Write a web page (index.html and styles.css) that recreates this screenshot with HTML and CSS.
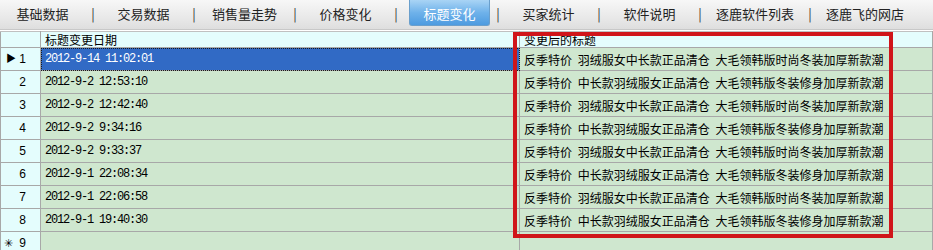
FILE: index.html
```html
<!DOCTYPE html>
<html lang="zh-CN">
<head>
  <meta charset="UTF-8" />
  <title>标题变化</title>
  <link rel="stylesheet" href="styles.css">
</head>
<body>

  <nav class="tabs">
    <span class="tab">基础数据</span><span class="sep">|</span>
    <span class="tab">交易数据</span><span class="sep">|</span>
    <span class="tab">销售量走势</span><span class="sep">|</span>
    <span class="tab">价格变化</span><span class="sep">|</span>
    <span class="tab active">标题变化</span><span class="sep">|</span>
    <span class="tab">买家统计</span><span class="sep">|</span>
    <span class="tab">软件说明</span><span class="sep">|</span>
    <span class="tab wide">逐鹿软件列表</span><span class="sep">|</span>
    <span class="tab wide">逐鹿飞的网店</span>
  </nav>

  <div class="grid-wrap">
    <table class="grid">
      <colgroup>
        <col class="c-head">
        <col class="c-date">
        <col class="c-title">
      </colgroup>
      <thead>
        <tr>
          <th class="rowhead"></th>
          <th>标题变更日期</th>
          <th>变更后的标题</th>
        </tr>
      </thead>
      <tbody>
        <tr>
          <td class="rowhead"><span class="mark">&#9654;</span>1</td>
          <td class="date selected">2012-9-14 11:02:01</td>
          <td class="title">反季特价 羽绒服女中长款正品清仓 大毛领韩版时尚冬装加厚新款潮</td>
        </tr>
        <tr>
          <td class="rowhead">2</td>
          <td class="date">2012-9-2 12:53:10</td>
          <td class="title">反季特价 中长款羽绒服女正品清仓 大毛领韩版冬装修身加厚新款潮</td>
        </tr>
        <tr>
          <td class="rowhead">3</td>
          <td class="date">2012-9-2 12:42:40</td>
          <td class="title">反季特价 羽绒服女中长款正品清仓 大毛领韩版时尚冬装加厚新款潮</td>
        </tr>
        <tr>
          <td class="rowhead">4</td>
          <td class="date">2012-9-2 9:34:16</td>
          <td class="title">反季特价 中长款羽绒服女正品清仓 大毛领韩版冬装修身加厚新款潮</td>
        </tr>
        <tr>
          <td class="rowhead">5</td>
          <td class="date">2012-9-2 9:33:37</td>
          <td class="title">反季特价 羽绒服女中长款正品清仓 大毛领韩版时尚冬装加厚新款潮</td>
        </tr>
        <tr>
          <td class="rowhead">6</td>
          <td class="date">2012-9-1 22:08:34</td>
          <td class="title">反季特价 中长款羽绒服女正品清仓 大毛领韩版冬装修身加厚新款潮</td>
        </tr>
        <tr>
          <td class="rowhead">7</td>
          <td class="date">2012-9-1 22:06:58</td>
          <td class="title">反季特价 羽绒服女中长款正品清仓 大毛领韩版时尚冬装加厚新款潮</td>
        </tr>
        <tr>
          <td class="rowhead">8</td>
          <td class="date">2012-9-1 19:40:30</td>
          <td class="title">反季特价 中长款羽绒服女正品清仓 大毛领韩版冬装修身加厚新款潮</td>
        </tr>
        <tr>
          <td class="rowhead"><span class="mark star">&#10035;</span>9</td>
          <td class="date"></td>
          <td></td>
        </tr>
      </tbody>
    </table>

    <div class="highlight"></div>
  </div>

</body>
</html>
```

FILE: styles.css
```css
body {
  margin: 0;
  font-family: "Noto Sans CJK SC", "Liberation Sans", sans-serif;
  background: #ffffff;
  color: #000;
  overflow: hidden;
}

.tabs {
  display: flex;
  align-items: flex-start;
  height: 29px;
  padding-left: 2px;
  background: linear-gradient(#f7f7f7, #e9e9e9 60%, #dedede);
  border-bottom: 1px solid #c8c8c8;
  font-size: 13px;
}

.tab {
  width: 81px;
  height: 26px;
  line-height: 28px;
  text-align: center;
  color: #222;
}

.tab.wide {
  width: 90px;
}

.tab.active {
  color: #ffffff;
  background: linear-gradient(#a9d4f5, #6fb2ea 50%, #4d9be0);
  border: 1px solid #6a9fcc;
  border-top: none;
  border-radius: 0 0 3px 3px;
  height: 25px;
  width: 79px;
  margin-left: 3px;
  margin-right: -2px;
}

.sep {
  width: 20px;
  line-height: 28px;
  text-align: center;
  color: #333;
}

.grid-wrap {
  position: relative;
  padding-top: 1px;
}

.grid {
  border-collapse: collapse;
  table-layout: fixed;
  width: 932px;
  font-size: 12px;
  border-left: 1px solid #a0a0a0;
}

.c-head { width: 40px; }
.c-date { width: 479px; }
.c-title { width: 413px; }

.grid th {
  height: 15px;
  padding: 0 0 0 4px;
  text-align: left;
  font-weight: normal;
  background: #e4fdfd;
  border: 1px solid #a8a8a8;
  border-top-color: #c0c0c0;
  line-height: 15px;
  white-space: nowrap;
}

.grid td {
  height: 22px;
  padding: 0 0 0 4px;
  background: #cfe7cf;
  border: 1px solid #a8a8a8;
  white-space: nowrap;
  overflow: hidden;
}

.grid td.rowhead {
  position: relative;
  background: #e4fdfd;
  text-align: right;
  padding: 0 14px 0 0;
  font-family: "Liberation Sans", sans-serif;
}

.mark {
  position: absolute;
  left: 5px;
  top: 5px;
  font-size: 10px;
  line-height: 12px;
}

.mark.star {
  left: 3px;
  font-size: 11px;
}

.date {
  font-family: "Liberation Mono", monospace;
  letter-spacing: -1.2px;
}

.title {
  word-spacing: 3px;
}

.grid td.selected {
  background: #316ac5;
  color: #ffffff;
  outline: 1px dotted #1a1a1a;
  outline-offset: -1px;
}

.highlight {
  position: absolute;
  left: 513px;
  top: 2px;
  width: 372px;
  height: 198px;
  border: 4px solid #d0151a;
  pointer-events: none;
}
```
